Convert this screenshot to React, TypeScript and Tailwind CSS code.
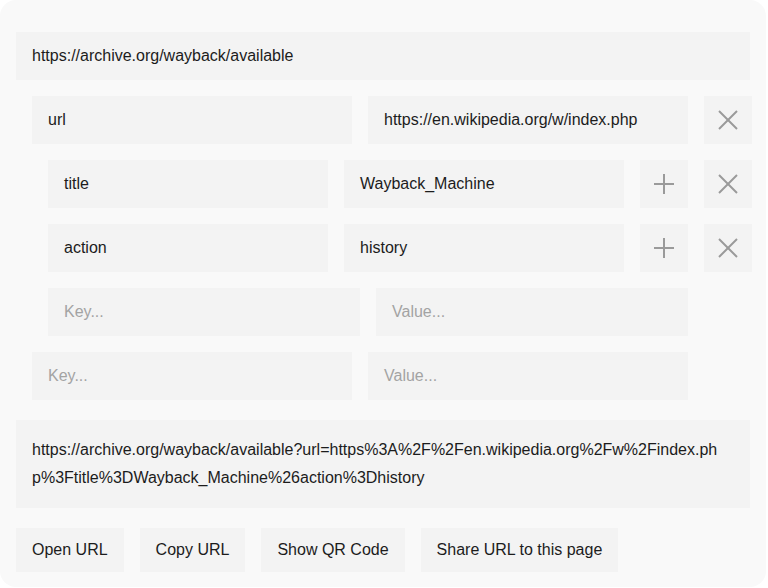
import React from "react";

const font = { fontFamily: "'Liberation Sans', Arial, sans-serif" };

function Field({ value, placeholder, w }: { value?: string; placeholder?: string; w: string }) {
  return (
    <div className={`${w} h-12 bg-[#f3f3f3] flex items-center px-4 text-[16px] shrink-0`}>
      {value ? (
        <span className="text-[#1c1c1c]">{value}</span>
      ) : (
        <span className="text-[#a3a3a3]">{placeholder}</span>
      )}
    </div>
  );
}

function IconBtn({ kind }: { kind: "x" | "plus" }) {
  return (
    <div className="w-12 h-12 bg-[#f3f3f3] flex items-center justify-center shrink-0">
      <svg width="24" height="24" viewBox="0 0 24 24" fill="none" stroke="#9a9a9a" strokeWidth="2" strokeLinecap="butt">
        {kind === "x" ? (
          <>
            <path d="M3 3 L21 21" />
            <path d="M21 3 L3 21" />
          </>
        ) : (
          <>
            <path d="M12 2 L12 22" />
            <path d="M2 12 L22 12" />
          </>
        )}
      </svg>
    </div>
  );
}

function Btn({ label }: { label: string }) {
  return (
    <div className="h-11 px-4 bg-[#f3f3f3] flex items-center text-[16px] text-[#1c1c1c]">{label}</div>
  );
}

export default function App() {
  return (
    <div className="w-[766px] h-[587px] bg-[#f9f9f9] rounded-2xl px-4 pt-8 pb-4 flex flex-col" style={font}>
      <div className="h-12 shrink-0 bg-[#f3f3f3] flex items-center px-4 text-[16px] text-[#1c1c1c]">
        https://archive.org/wayback/available
      </div>
      <div className="flex flex-col gap-4 mt-4 pl-4">
        <div className="flex gap-4">
          <Field w="w-[320px]" value="url" />
          <Field w="w-[320px]" value="https://en.wikipedia.org/w/index.php" />
          <IconBtn kind="x" />
        </div>
        <div className="flex flex-col gap-4 pl-4">
          <div className="flex gap-4">
            <Field w="w-[280px]" value="title" />
            <Field w="w-[280px]" value="Wayback_Machine" />
            <IconBtn kind="plus" />
            <IconBtn kind="x" />
          </div>
          <div className="flex gap-4">
            <Field w="w-[280px]" value="action" />
            <Field w="w-[280px]" value="history" />
            <IconBtn kind="plus" />
            <IconBtn kind="x" />
          </div>
          <div className="flex gap-4">
            <Field w="w-[312px]" placeholder="Key..." />
            <Field w="w-[312px]" placeholder="Value..." />
          </div>
        </div>
        <div className="flex gap-4">
          <Field w="w-[320px]" placeholder="Key..." />
          <Field w="w-[320px]" placeholder="Value..." />
        </div>
      </div>
      <div className="mt-5 shrink-0 bg-[#f3f3f3] px-4 py-4 text-[16px] leading-[28px] text-[#1c1c1c] break-all">
        https://archive.org/wayback/available?url=https%3A%2F%2Fen.wikipedia.org%2Fw%2Findex.php%3Ftitle%3DWayback_Machine%26action%3Dhistory
      </div>
      <div className="mt-5 flex gap-4 shrink-0">
        <Btn label="Open URL" />
        <Btn label="Copy URL" />
        <Btn label="Show QR Code" />
        <Btn label="Share URL to this page" />
      </div>
    </div>
  );
}
